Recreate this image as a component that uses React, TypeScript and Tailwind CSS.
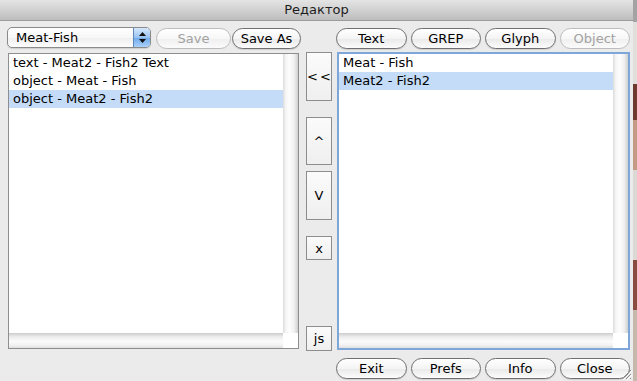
import React from "react";

const font = { fontFamily: '"DejaVu Sans", "Liberation Sans", sans-serif' };

function Capsule({ label, disabled }: { label: string; disabled?: boolean }) {
  return (
    <div
      className={
        disabled
          ? "h-[21px] w-full rounded-full border border-[#bcbcbc] text-[#a2a2a2] bg-[linear-gradient(#ffffff,#f7f7f7_50%,#efefef_51%,#fbfbfb)] flex items-center justify-center text-[13px] leading-none"
          : "h-[21px] w-full rounded-full border border-[#707070] text-black bg-[linear-gradient(#ffffff,#f4f4f4_50%,#e9e9e9_51%,#fcfcfc)] shadow-[0_1px_1px_rgba(0,0,0,0.12)] flex items-center justify-center text-[13px] leading-none"
      }
    >
      {label}
    </div>
  );
}

function Bevel({ label, h, wide }: { label: string; h: string; wide?: boolean }) {
  return (
    <div
      className={`${h} w-[26px] border border-[#8d8d8d] bg-[linear-gradient(#fbfbfb,#efefef)] flex items-center justify-center text-[13px] leading-none text-black ${wide ? "tracking-[2px] pl-[2px]" : ""}`}
    >
      {label}
    </div>
  );
}

function ListBox({
  rows,
  selected,
  focused,
  sizeClass,
  padClass,
}: {
  rows: string[];
  selected: number;
  focused?: boolean;
  sizeClass: string;
  padClass: string;
}) {
  return (
    <div
      className={
        (focused
          ? "border-2 border-[#7ea6d8] "
          : "border border-[#8e8e8e] ") +
        sizeClass +
        " flex flex-col bg-white"
      }
    >
      <div className="flex flex-1 min-h-0">
        <div className="flex-1 flex flex-col">
          {rows.map((r, i) => (
            <div
              key={i}
              className={
                (i === selected ? "bg-[#c4dcf8] " : "") +
                padClass +
                " h-[18px] leading-[18px] text-[13px] text-black whitespace-nowrap"
              }
            >
              {r}
            </div>
          ))}
        </div>
        <div className="w-[15px] bg-[linear-gradient(to_right,#dcdcdc,#f6f6f6_20%,#fdfdfd_45%,#f0f0f0_75%,#cfcfcf)]" />
      </div>
      <div className="flex h-[15px]">
        <div className="flex-1 bg-[linear-gradient(#cccccc,#ececec_25%,#fbfbfb_55%,#f2f2f2_80%,#e0e0e0)]" />
        <div className="w-[15px] bg-white" />
      </div>
    </div>
  );
}

export default function App() {
  return (
    <div className="flex w-[637px] h-[381px] overflow-hidden" style={font}>
      <div className="relative w-[633px] h-[381px] flex flex-col bg-[#ebebeb]">
        <div className="h-[21px] shrink-0 bg-[linear-gradient(#e4e4e4,#cdcdcd_60%,#bdbdbd)] border-b border-[#9c9c9c] flex items-center justify-center text-[13px] text-[#1c1c1c]">
          Редактор
        </div>
        <div className="flex flex-1 pl-[7px]">
          {/* left column */}
          <div className="w-[294px] flex flex-col">
            <div className="mt-[6px] h-[22px] flex items-start">
              <div className="w-[144px] h-[21px] rounded-[5px] border border-[#8a8a8a] bg-[linear-gradient(#ffffff,#f7f7f7_50%,#eeeeee_51%,#fdfdfd)] flex overflow-hidden shadow-[0_1px_1px_rgba(0,0,0,0.12)]">
                <div className="flex-1 pl-[8px] text-[13px] leading-[19px] text-black">
                  Meat-Fish
                </div>
                <div className="w-[17px] border-l border-[#5f86b8] bg-[linear-gradient(#d6e8fc,#98c2f1_50%,#6ea8ea_51%,#a9d1fb)] flex flex-col items-center justify-center gap-[3px]">
                  <svg width="7" height="4" viewBox="0 0 7 4">
                    <path d="M3.5 0 L7 4 L0 4 Z" fill="#111" />
                  </svg>
                  <svg width="7" height="4" viewBox="0 0 7 4">
                    <path d="M0 0 L7 0 L3.5 4 Z" fill="#111" />
                  </svg>
                </div>
              </div>
              <div className="ml-[5px] mt-[1px] w-[75px]">
                <Capsule label="Save" disabled />
              </div>
              <div className="ml-[1px] mt-[1px] w-[69px]">
                <Capsule label="Save As" />
              </div>
            </div>
            <div className="mt-[4px] ml-[1px]">
              <ListBox
                rows={[
                  "text - Meat2 - Fish2 Text",
                  "object - Meat - Fish",
                  "object - Meat2 - Fish2",
                ]}
                selected={2}
                sizeClass="w-[291px] h-[296px]"
                padClass="pl-[4px]"
              />
            </div>
          </div>
          {/* middle column */}
          <div className="ml-[5px] w-[26px] flex flex-col">
            <div className="mt-[31px]">
              <Bevel label="<<" h="h-[49px]" wide />
            </div>
            <div className="mt-[16px]">
              <Bevel label="^" h="h-[48px]" />
            </div>
            <div className="mt-[6px]">
              <Bevel label="V" h="h-[49px]" />
            </div>
            <div className="mt-[16px]">
              <Bevel label="x" h="h-[24px]" />
            </div>
            <div className="mt-[66px]">
              <Bevel label="js" h="h-[25px]" />
            </div>
          </div>
          {/* right column */}
          <div className="ml-[4px] w-[294px] flex flex-col">
            <div className="mt-[7px] grid grid-cols-4 gap-[4px]">
              <Capsule label="Text" />
              <Capsule label="GREP" />
              <Capsule label="Glyph" />
              <Capsule label="Object" disabled />
            </div>
            <div className="mt-[3px] ml-[1px]">
              <ListBox
                rows={["Meat - Fish", "Meat2 - Fish2"]}
                selected={1}
                focused
                sizeClass="w-[293px] h-[298px]"
                padClass="pl-[4px]"
              />
            </div>
            <div className="mt-[8px] grid grid-cols-4 gap-[4px]">
              <Capsule label="Exit" />
              <Capsule label="Prefs" />
              <Capsule label="Info" />
              <Capsule label="Close" />
            </div>
          </div>
        </div>
        <svg
          className="absolute right-[1px] bottom-[1px]"
          width="12"
          height="12"
          viewBox="0 0 12 12"
        >
          <path d="M11 2 L2 11 M11 6 L6 11 M11 10 L10 11" stroke="#8a8a8a" strokeWidth="1" />
          <path d="M12 3 L3 12 M12 7 L7 12" stroke="#ffffff" strokeWidth="1" />
        </svg>
      </div>
      <div className="w-[4px] flex flex-col">
        <div className="h-[22px] bg-[#a3a3a3]" />
        <div className="h-[62px] bg-[#e2dedb]" />
        <div className="h-[36px] bg-[#6e3a30]" />
        <div className="h-[50px] bg-[#c49a84]" />
        <div className="h-[90px] bg-[#dcd8d4]" />
        <div className="h-[50px] bg-[#8a4c40]" />
        <div className="flex-1 bg-[#c6b8aa]" />
      </div>
    </div>
  );
}
